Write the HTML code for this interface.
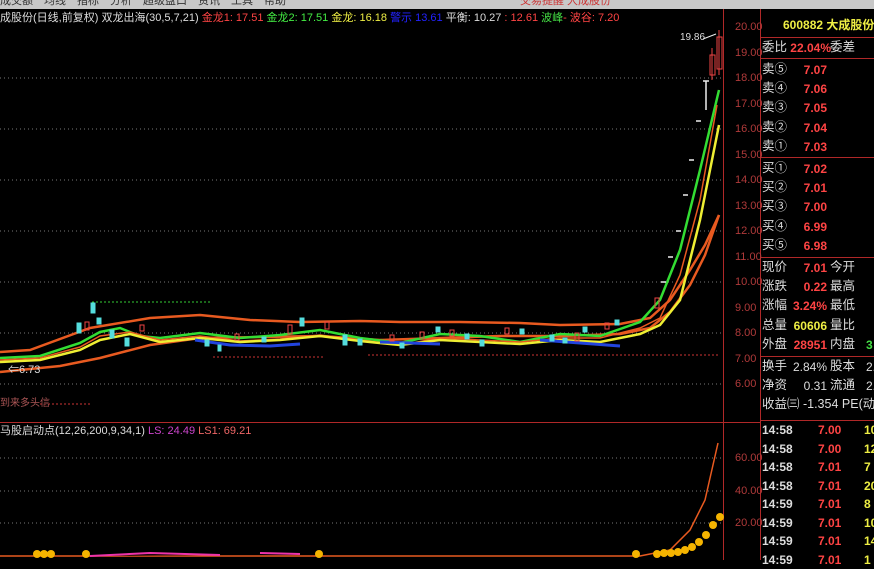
<!DOCTYPE html>
<html><head><meta charset="utf-8"><style>
body{margin:0;width:874px;height:560px;background:#000;overflow:hidden;position:relative;font-family:"Liberation Sans","Noto Sans CJK SC",sans-serif}
.t{position:absolute;white-space:nowrap;line-height:1}
.rp{position:absolute;left:762px;font-size:12.5px;color:#ddd;white-space:nowrap;line-height:1}
.v{position:absolute;width:66px;text-align:right;left:761px;font-size:12px;font-weight:bold;line-height:1}
.ax{position:absolute;left:735px;font-size:11px;color:#b03a3a;line-height:1}
</style></head><body>
<div style="position:absolute;left:0;top:0;width:874px;height:9px;background:#c8c8c8"></div>
<div class="t" style="left:0;top:-4px;font-size:11px;color:#333">成交额　均线　指标　分析　超级盘口　资讯　工具　帮助</div>
<div class="t" style="left:520px;top:-4px;font-size:11px;color:#c33">交易提醒 大成股份</div>
<div class="t" style="left:0;top:13px;font-size:11px;color:#ddd">成股份(日线,前复权) 双龙出海(30,5,7,21) <span style="color:#f44">金龙1: 17.51</span> <span style="color:#4e4">金龙2: 17.51</span> <span style="color:#ee4">金龙: 16.18</span> <span style="color:#22f">警示 13.61</span> 平衡: 10.27 <span style="color:#f44">: 12.61</span> <span style="color:#4d4">波峰</span><span style="color:#f44">- 波谷: 7.20</span></div>
<svg width="874" height="560" style="position:absolute;left:0;top:0">
<g stroke="#777" stroke-dasharray="1 3" stroke-width="1">
<line x1="0" y1="78" x2="723" y2="78"/><line x1="0" y1="129" x2="723" y2="129"/><line x1="0" y1="180" x2="723" y2="180"/><line x1="0" y1="231" x2="723" y2="231"/><line x1="0" y1="282" x2="723" y2="282"/><line x1="0" y1="333" x2="723" y2="333"/><line x1="0" y1="384" x2="723" y2="384"/>
<line x1="0" y1="458" x2="723" y2="458"/><line x1="0" y1="491" x2="723" y2="491"/><line x1="0" y1="523" x2="723" y2="523"/>
</g>
<g stroke="#b02828" stroke-width="1">
<line x1="723.5" y1="9" x2="723.5" y2="560"/><line x1="760.5" y1="9" x2="760.5" y2="560"/>
<line x1="0" y1="422.5" x2="760" y2="422.5"/><line x1="760" y1="37.5" x2="874" y2="37.5"/><line x1="760" y1="58.5" x2="874" y2="58.5"/><line x1="760" y1="157.5" x2="874" y2="157.5"/><line x1="760" y1="257.5" x2="874" y2="257.5"/><line x1="760" y1="356.5" x2="874" y2="356.5"/><line x1="760" y1="420.5" x2="874" y2="420.5"/>
</g>
<line x1="92" y1="302" x2="210" y2="302" stroke="#3c3" stroke-dasharray="2 2"/>
<line x1="213" y1="357" x2="325" y2="357" stroke="#c33" stroke-dasharray="2 2"/>
<line x1="368" y1="355" x2="718" y2="355" stroke="#c33" stroke-dasharray="2 2"/>
<line x1="40" y1="404" x2="90" y2="404" stroke="#c33" stroke-dasharray="2 2"/>
<g fill="none" stroke-width="2.5">
<path d="M0 352 L30 350 L90 328 L150 318 L200 315 L250 320 L300 322 L360 321 L400 322 L460 322 L520 323 L560 325 L620 324 L650 318 L670 300 L690 270 L705 245 L719 215" stroke="#e85a20"/>
<path d="M0 372 L60 366 L100 358 L150 345 L200 338 L260 337 L320 336 L380 340 L440 338 L500 336 L560 336 L620 334 L650 328 L670 312 L690 285 L705 255 L719 215" stroke="#e85a20"/>
<path d="M0 358 L40 356 L80 343 L100 332 L120 328 L140 336 L160 338 L200 333 L240 338 L280 335 L320 330 L360 338 L400 343 L440 334 L480 336 L520 342 L560 334 L600 336 L640 322 L660 300 L680 250 L700 170 L719 90" stroke="#3d3"/>
<path d="M0 360 L40 358 L80 347 L100 336 L130 332 L160 340 L200 336 L240 341 L280 339 L320 335 L360 340 L400 345 L440 338 L480 340 L520 342 L560 338 L600 338 L640 328 L660 318 L680 275 L700 200 L717 105" stroke="#e85a20" stroke-width="1.5"/>
<path d="M0 362 L40 360 L80 350 L100 340 L130 334 L160 342 L200 338 L240 342 L280 340 L320 336 L360 341 L400 345 L440 340 L480 342 L520 344 L560 340 L600 342 L640 334 L660 325 L680 300 L700 220 L719 125" stroke="#ee3"/>
<path d="M195 340 L230 345 L270 346 L300 344 M380 342 L440 344 M540 340 L620 346" stroke="#24d" stroke-width="3"/>
</g>
<g fill="#5dd" stroke="#5dd">
<rect x="91" y="303" width="4" height="10"/><rect x="77" y="323" width="4" height="10"/><rect x="97" y="318" width="4" height="6"/><rect x="110" y="330" width="4" height="8"/><rect x="125" y="338" width="4" height="8"/><rect x="205" y="340" width="4" height="6"/><rect x="218" y="345" width="3" height="6"/><rect x="262" y="337" width="4" height="5"/><rect x="300" y="318" width="4" height="8"/><rect x="343" y="335" width="4" height="10"/><rect x="358" y="339" width="4" height="6"/><rect x="400" y="343" width="4" height="5"/><rect x="436" y="327" width="4" height="5"/><rect x="465" y="334" width="4" height="5"/><rect x="480" y="340" width="4" height="6"/><rect x="520" y="329" width="4" height="5"/><rect x="550" y="335" width="4" height="6"/><rect x="563" y="338" width="4" height="5"/><rect x="583" y="327" width="4" height="5"/><rect x="615" y="320" width="4" height="5"/></g>
<g fill="none" stroke="#e44">
<rect x="85" y="322" width="4" height="8"/><rect x="140" y="325" width="4" height="6"/><rect x="235" y="334" width="4" height="6"/><rect x="288" y="325" width="4" height="9"/><rect x="325" y="322" width="4" height="7"/><rect x="390" y="335" width="4" height="6"/><rect x="420" y="332" width="4" height="6"/><rect x="450" y="330" width="4" height="6"/><rect x="505" y="328" width="4" height="6"/><rect x="575" y="333" width="4" height="8"/><rect x="605" y="323" width="4" height="6"/><rect x="655" y="298" width="4" height="10"/><rect x="710" y="55" width="5" height="20"/><rect x="717" y="37" width="5" height="32"/>
<line x1="712" y1="48" x2="712" y2="80"/><line x1="719" y1="30" x2="719" y2="75"/></g>
<g stroke="#eee" stroke-width="1.5">
<line x1="661" y1="282" x2="666" y2="282"/><line x1="668" y1="257" x2="673" y2="257"/><line x1="676" y1="231" x2="681" y2="231"/><line x1="683" y1="195" x2="688" y2="195"/><line x1="689" y1="160" x2="694" y2="160"/><line x1="696" y1="121" x2="701" y2="121"/><line x1="706" y1="81" x2="706" y2="110"/><line x1="703" y1="81" x2="709" y2="81"/>
<path d="M703 39 L716 34" fill="none" stroke-width="1"/></g>
<path d="M0 556 L640 556 L670 550 L690 530 L705 500 L718 443" fill="none" stroke="#e85a20" stroke-width="1.5"/>
<path d="M90 556 L150 553 L220 555 M260 553 L300 554" stroke="#e3a" stroke-width="2"/>
<g fill="#f5b400">
<circle cx="37" cy="554" r="4"/><circle cx="44" cy="554" r="4"/><circle cx="51" cy="554" r="4"/><circle cx="86" cy="554" r="4"/><circle cx="319" cy="554" r="4"/><circle cx="636" cy="554" r="4"/><circle cx="657" cy="554" r="4"/><circle cx="664" cy="553" r="4"/><circle cx="671" cy="553" r="4"/><circle cx="678" cy="552" r="4"/><circle cx="685" cy="550" r="4"/><circle cx="692" cy="547" r="4"/><circle cx="699" cy="542" r="4"/><circle cx="706" cy="535" r="4"/><circle cx="713" cy="525" r="4"/><circle cx="720" cy="517" r="4"/></g>
</svg>
<div class="t" style="left:680px;top:33px;font-size:10px;color:#ddd">19.86</div>
<div class="t" style="left:8px;top:365px;font-size:11px;color:#ddd">⇐6.73</div>
<div class="t" style="left:0;top:399px;font-size:10px;color:#a55">到来多头信</div>
<div class="t" style="left:0;top:426px;font-size:11px;color:#ddd">马股启动点(12,26,200,9,34,1) <span style="color:#c4c">LS: 24.49</span> <span style="color:#e66">LS1: 69.21</span></div>
<div class="ax" style="top:22px">20.00</div><div class="ax" style="top:48px">19.00</div><div class="ax" style="top:73px">18.00</div><div class="ax" style="top:99px">17.00</div><div class="ax" style="top:124px">16.00</div><div class="ax" style="top:150px">15.00</div><div class="ax" style="top:175px">14.00</div><div class="ax" style="top:201px">13.00</div><div class="ax" style="top:226px">12.00</div><div class="ax" style="top:252px">11.00</div><div class="ax" style="top:277px">10.00</div><div class="ax" style="top:303px">9.00</div><div class="ax" style="top:328px">8.00</div><div class="ax" style="top:354px">7.00</div><div class="ax" style="top:379px">6.00</div>
<div class="ax" style="top:453px">60.00</div><div class="ax" style="top:486px">40.00</div><div class="ax" style="top:518px">20.00</div>
<div class="t" style="left:783px;top:19px;font-size:12px;color:#ee4;font-weight:bold">600882 大成股份</div>
<div class="rp" style="top:41px">委比</div><div class="v" style="top:42px;color:#f44;left:765px">22.04%</div><div class="rp" style="top:41px;left:830px">委差</div>
<div class="rp" style="top:63px">卖⑤</div><div class="v" style="top:64px;color:#f44">7.07</div>
<div class="rp" style="top:82px">卖④</div><div class="v" style="top:83px;color:#f44">7.06</div>
<div class="rp" style="top:101px">卖③</div><div class="v" style="top:102px;color:#f44">7.05</div>
<div class="rp" style="top:121px">卖②</div><div class="v" style="top:122px;color:#f44">7.04</div>
<div class="rp" style="top:140px">卖①</div><div class="v" style="top:141px;color:#f44">7.03</div>
<div class="rp" style="top:162px">买①</div><div class="v" style="top:163px;color:#f44">7.02</div>
<div class="rp" style="top:181px">买②</div><div class="v" style="top:182px;color:#f44">7.01</div>
<div class="rp" style="top:200px">买③</div><div class="v" style="top:201px;color:#f44">7.00</div>
<div class="rp" style="top:220px">买④</div><div class="v" style="top:221px;color:#f44">6.99</div>
<div class="rp" style="top:239px">买⑤</div><div class="v" style="top:240px;color:#f44">6.98</div>
<div class="rp" style="top:261px">现价</div><div class="v" style="top:262px;color:#f44">7.01</div><div class="rp" style="top:261px;left:830px">今开</div>
<div class="rp" style="top:280px">涨跌</div><div class="v" style="top:281px;color:#f44">0.22</div><div class="rp" style="top:280px;left:830px">最高</div>
<div class="rp" style="top:299px">涨幅</div><div class="v" style="top:300px;color:#f44">3.24%</div><div class="rp" style="top:299px;left:830px">最低</div>
<div class="rp" style="top:319px">总量</div><div class="v" style="top:320px;color:#ee4">60606</div><div class="rp" style="top:319px;left:830px">量比</div>
<div class="rp" style="top:338px">外盘</div><div class="v" style="top:339px;color:#f44">28951</div><div class="rp" style="top:338px;left:830px">内盘</div><div class="rp" style="top:339px;left:866px;color:#4d4;font-weight:bold;font-size:12px">3</div>
<div class="rp" style="top:360px">换手</div><div class="v" style="top:361px;color:#ddd;font-weight:normal">2.84%</div><div class="rp" style="top:360px;left:830px">股本</div><div class="rp" style="top:361px;left:866px;font-size:12px">2.</div>
<div class="rp" style="top:379px">净资</div><div class="v" style="top:380px;color:#ddd;font-weight:normal">0.31</div><div class="rp" style="top:379px;left:830px">流通</div><div class="rp" style="top:380px;left:866px;font-size:12px">2.</div>
<div class="rp" style="top:398px">收益㈢ -1.354 PE(动)</div>
<div style="position:absolute;left:762px;top:421px;font-size:12px;font-weight:bold;line-height:18.5px;color:#ddd">14:58<br>14:58<br>14:58<br>14:58<br>14:59<br>14:59<br>14:59<br>14:59</div>
<div style="position:absolute;left:818px;top:421px;font-size:12px;font-weight:bold;line-height:18.5px;color:#f44">7.00<br>7.00<br>7.01<br>7.01<br>7.01<br>7.01<br>7.01<br>7.01</div>
<div style="position:absolute;left:864px;top:421px;font-size:12px;font-weight:bold;line-height:18.5px;color:#ee4">10<br>12<br>7<br>20<br>8<br>10<br>14<br>1</div>
</body></html>
